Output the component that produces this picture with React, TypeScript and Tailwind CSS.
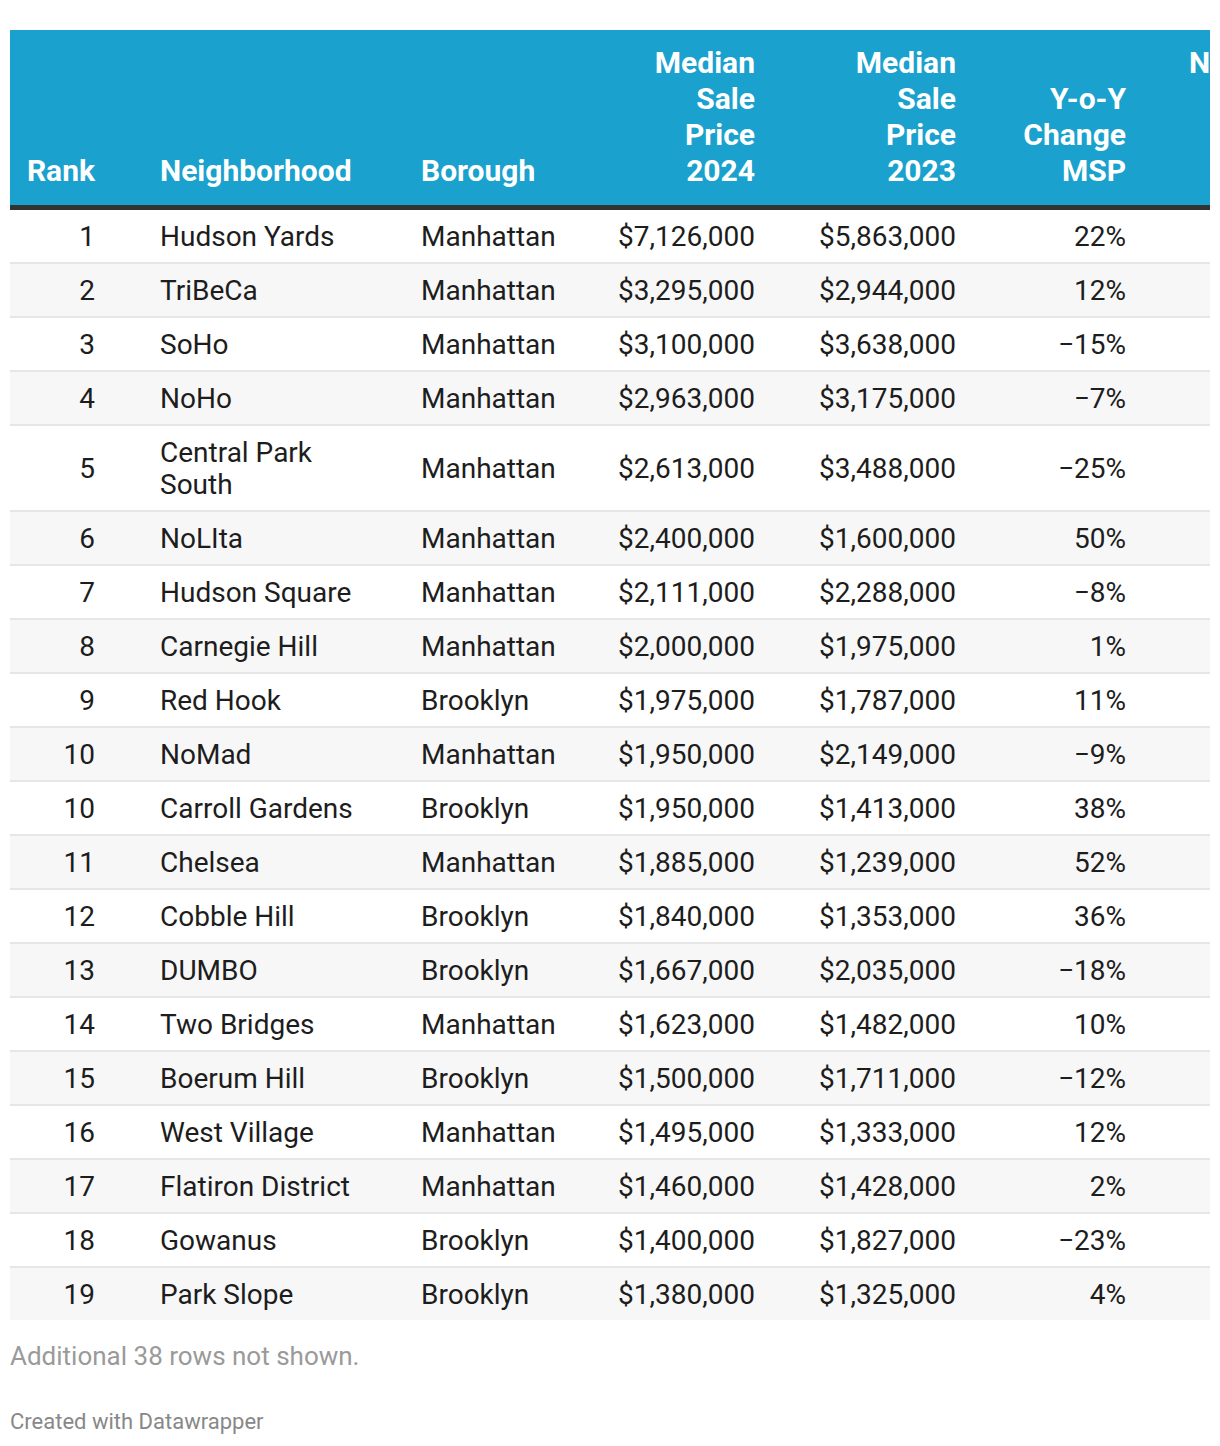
const rows: [string, string, string, string, string, string][] = [
  ["1", "Hudson Yards", "Manhattan", "$7,126,000", "$5,863,000", "22%"],
  ["2", "TriBeCa", "Manhattan", "$3,295,000", "$2,944,000", "12%"],
  ["3", "SoHo", "Manhattan", "$3,100,000", "$3,638,000", "\u221215%"],
  ["4", "NoHo", "Manhattan", "$2,963,000", "$3,175,000", "\u22127%"],
  ["5", "Central Park South", "Manhattan", "$2,613,000", "$3,488,000", "\u221225%"],
  ["6", "NoLIta", "Manhattan", "$2,400,000", "$1,600,000", "50%"],
  ["7", "Hudson Square", "Manhattan", "$2,111,000", "$2,288,000", "\u22128%"],
  ["8", "Carnegie Hill", "Manhattan", "$2,000,000", "$1,975,000", "1%"],
  ["9", "Red Hook", "Brooklyn", "$1,975,000", "$1,787,000", "11%"],
  ["10", "NoMad", "Manhattan", "$1,950,000", "$2,149,000", "\u22129%"],
  ["10", "Carroll Gardens", "Brooklyn", "$1,950,000", "$1,413,000", "38%"],
  ["11", "Chelsea", "Manhattan", "$1,885,000", "$1,239,000", "52%"],
  ["12", "Cobble Hill", "Brooklyn", "$1,840,000", "$1,353,000", "36%"],
  ["13", "DUMBO", "Brooklyn", "$1,667,000", "$2,035,000", "\u221218%"],
  ["14", "Two Bridges", "Manhattan", "$1,623,000", "$1,482,000", "10%"],
  ["15", "Boerum Hill", "Brooklyn", "$1,500,000", "$1,711,000", "\u221212%"],
  ["16", "West Village", "Manhattan", "$1,495,000", "$1,333,000", "12%"],
  ["17", "Flatiron District", "Manhattan", "$1,460,000", "$1,428,000", "2%"],
  ["18", "Gowanus", "Brooklyn", "$1,400,000", "$1,827,000", "\u221223%"],
  ["19", "Park Slope", "Brooklyn", "$1,380,000", "$1,325,000", "4%"],
]

// table is wider than its frame; the last column is clipped like the embed
const cols = "grid grid-cols-[130px_261px_179px_195px_201px_170px_174px] w-[1310px]"

const App = () => {
  return (
    <div className="bg-white min-h-[1446px] pt-[30px] pl-[10px]" style={{ fontFamily: "Roboto, 'Liberation Sans', sans-serif" }}>
      <div className="w-[1200px] overflow-hidden">
        <div className={`${cols} bg-[#1aa1cd] text-white font-bold text-[30px] leading-[36px] border-b-[5px] border-[#333333]`}>
          <div className="pt-[15px] pb-[16px] pr-[45px] text-right self-end">Rank</div>
          <div className="pt-[15px] pb-[16px] pl-[20px] self-end">Neighborhood</div>
          <div className="pt-[15px] pb-[16px] pl-[20px] self-end">Borough</div>
          <div className="pt-[15px] pb-[16px] pr-[20px] text-right self-end">Median<br />Sale<br />Price<br />2024</div>
          <div className="pt-[15px] pb-[16px] pr-[20px] text-right self-end">Median<br />Sale<br />Price<br />2023</div>
          <div className="pt-[15px] pb-[16px] pr-[20px] text-right self-end">Y-o-Y<br />Change<br />MSP</div>
          <div className="pt-[15px] pb-[16px] pr-[23px] text-right self-start">Number<br />of<br />Sales<br />2024</div>
        </div>
        {rows.map((r, idx) => (
          <div
            key={idx}
            className={`${cols} items-center text-[28px] leading-[32px] text-[#1d1d1d] ${idx % 2 === 1 ? "bg-[#f7f7f7]" : "bg-white"} ${idx < rows.length - 1 ? "border-b-2 border-[#e6e6e6]" : ""}`}
          >
            <div className="pt-[11px] pb-[9px] pr-[45px] text-right">{r[0]}</div>
            <div className="pt-[11px] pb-[9px] pl-[20px] pr-[20px]">
              {r[1] === "Central Park South" ? <>Central Park<br />South</> : r[1]}
            </div>
            <div className="pt-[11px] pb-[9px] pl-[20px]">{r[2]}</div>
            <div className="pt-[11px] pb-[9px] pr-[20px] text-right">{r[3]}</div>
            <div className="pt-[11px] pb-[9px] pr-[20px] text-right">{r[4]}</div>
            <div className="pt-[11px] pb-[9px] pr-[20px] text-right">{r[5]}</div>
            <div className="pt-[11px] pb-[9px] pr-[20px] text-right"></div>
          </div>
        ))}
      </div>
      <p className="mt-[21px] text-[26px] leading-[30px] text-[#9a9a9a]">Additional 38 rows not shown.</p>
      <p className="mt-[38px] text-[22px] leading-[26px] text-[#888888]">Created with Datawrapper</p>
    </div>
  )
}

export default App
